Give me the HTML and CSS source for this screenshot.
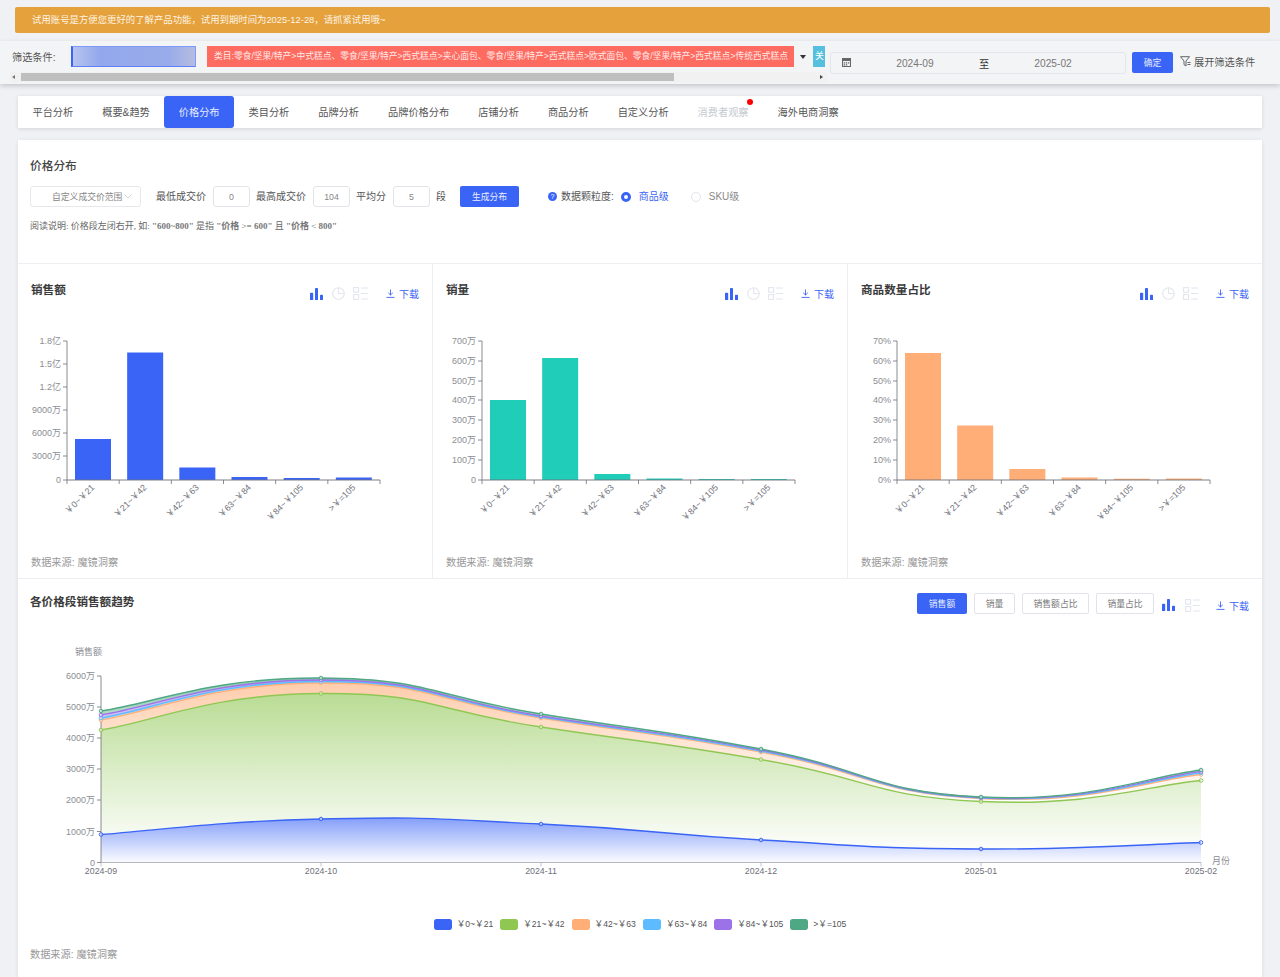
FILE: index.html
```html
<!DOCTYPE html>
<html lang="zh-CN">

<head>
  <meta charset="UTF-8" />
  <title>价格分布</title>
  <link rel="stylesheet" href="styles.css">
</head>

<body>
  <!-- iconos compartidos -->
  <svg class="icon-defs" width="0" height="0">
    <symbol id="i-bars" viewBox="0 0 13 12">
      <path d="M0 5.5q0-.8.8-.8h1.6q.8 0 .8.8V12H0zM5 .8q0-.8.8-.8h1.4q.8 0 .8.8V12H5zM10 7.5q0-.8.8-.8h1.4q.8 0 .8.8V12h-3z" fill="#3a64f6" />
    </symbol>
    <symbol id="i-pie" viewBox="0 0 14 14">
      <g fill="none" stroke="#e4e6ee" stroke-width="1.2">
        <circle cx="7" cy="7" r="6.2" />
        <path d="M7 .8V7h6.2" />
      </g>
    </symbol>
    <symbol id="i-list" viewBox="0 0 15 13">
      <g fill="none" stroke="#e4e6ee" stroke-width="1.1">
        <rect x=".6" y=".6" width="5" height="4.6" />
        <rect x=".6" y="7.6" width="5" height="4.8" />
        <path d="M8 1h7M8 6.5h7M8 12h7" />
      </g>
    </symbol>
    <symbol id="i-down" viewBox="0 0 9 9">
      <path d="M4.5 .5V6M2.2 3.8 4.5 6l2.3-2.2M.5 8.4h8" fill="none" stroke="#3a64f6" stroke-width=".9" />
    </symbol>
  </svg>

  <div class="aviso">试用账号是方便您更好的了解产品功能，试用到期时间为2025-12-28，请抓紧试用哦~</div>

  <div class="filtros">
    <div class="filtros-izq">
      <div class="filtros-fila">
        <span class="filtros-label">筛选条件:</span>
        <div class="caja-borrosa"></div>
        <span class="tag-rojo">类目:零食/坚果/特产&gt;中式糕点、零食/坚果/特产&gt;西式糕点&gt;夹心面包、零食/坚果/特产&gt;西式糕点&gt;欧式面包、零食/坚果/特产&gt;西式糕点&gt;传统西式糕点</span>
        <span class="triangulo"></span>
        <span class="tag-cian">关</span>
      </div>
      <div class="scroll">
        <span class="flecha flecha-izq"></span>
        <span class="scroll-thumb"></span>
        <span class="flecha flecha-der"></span>
      </div>
    </div>
    <div class="fechas">
      <svg class="calendario" width="9" height="9" viewBox="0 0 9 9">
        <rect x=".5" y=".5" width="8" height="8" fill="none" stroke="#666" />
        <rect x="0" y="0" width="9" height="3" fill="#666" />
        <path d="M1.700 4.300h1.400v1.200H1.700zM3.800 4.300h1.400v1.200H3.800zM5.900 4.300h1.400v1.200H5.900zM1.700 6.300h1.400v1.200H1.700zM3.800 6.300h1.400v1.200H3.800z" fill="#666" />
      </svg>
      <span class="fecha">2024-09</span>
      <span class="fecha-a">至</span>
      <span class="fecha">2025-02</span>
    </div>
    <button class="btn-azul btn-ok">确定</button>
    <div class="expandir">
      <svg width="11" height="11" viewBox="0 0 11 11">
        <path d="M.5 .7h9L6 5v5L4 8.600V5z" fill="none" stroke="#555" stroke-width=".9" />
        <path d="M7.500 6.500H10.500M7.500 8.500H10.500" stroke="#555" stroke-width=".9" />
      </svg>
      <span>展开筛选条件</span>
    </div>
  </div>

  <div class="tabs">
    <a class="tab">平台分析</a>
    <a class="tab">概要&amp;趋势</a>
    <a class="tab activo">价格分布</a>
    <a class="tab">类目分析</a>
    <a class="tab">品牌分析</a>
    <a class="tab">品牌价格分布</a>
    <a class="tab">店铺分析</a>
    <a class="tab">商品分析</a>
    <a class="tab">自定义分析</a>
    <a class="tab apagado">消费者观察<i class="punto"></i></a>
    <a class="tab">海外电商洞察</a>
  </div>

  <div class="panel">
    <section class="cabecera">
      <h2 class="titulo">价格分布</h2>
      <div class="form-fila">
        <div class="selector">自定义成交价范围
          <svg width="8" height="5" viewBox="0 0 8 5"><path d="M.5 .5 4 4 7.500 .5" fill="none" stroke="#c5c8ce" stroke-width=".8" /></svg>
        </div>
        <span class="form-label l-min">最低成交价</span>
        <input class="campo" value="0" readonly />
        <span class="form-label">最高成交价</span>
        <input class="campo" value="104" readonly />
        <span class="form-label">平均分</span>
        <input class="campo" value="5" readonly />
        <span class="form-label">段</span>
        <button class="btn-azul btn-gen">生成分布</button>
        <span class="ayuda">?</span>
        <span class="form-label l-gran">数据颗粒度:</span>
        <span class="radio marcado"></span>
        <span class="radio-txt azul">商品级</span>
        <span class="radio"></span>
        <span class="radio-txt">SKU级</span>
      </div>
      <p class="nota">阅读说明: 价格段左闭右开, 如: <b>"600~800"</b> 是指 <b>"价格</b> &gt;= <b>600"</b> 且 <b>"价格</b> &lt; <b>800"</b></p>
    </section>

    <section class="fila-graficos">
      <div class="columna">
        <div class="col-head">
          <h3 class="subtitulo">销售额</h3>
          <div class="herramientas">
            <svg class="ic-bars"><use href="#i-bars" /></svg>
            <svg class="ic-pie"><use href="#i-pie" /></svg>
            <svg class="ic-list"><use href="#i-list" /></svg>
            <a class="descarga"><svg class="ic-down"><use href="#i-down" /></svg>下载</a>
          </div>
        </div>
        <div id="g-ventas"></div>
        <p class="fuente">数据来源: 魔镜洞察</p>
      </div>
      <div class="columna">
        <div class="col-head">
          <h3 class="subtitulo">销量</h3>
          <div class="herramientas">
            <svg class="ic-bars"><use href="#i-bars" /></svg>
            <svg class="ic-pie"><use href="#i-pie" /></svg>
            <svg class="ic-list"><use href="#i-list" /></svg>
            <a class="descarga"><svg class="ic-down"><use href="#i-down" /></svg>下载</a>
          </div>
        </div>
        <div id="g-volumen"></div>
        <p class="fuente">数据来源: 魔镜洞察</p>
      </div>
      <div class="columna">
        <div class="col-head">
          <h3 class="subtitulo">商品数量占比</h3>
          <div class="herramientas">
            <svg class="ic-bars"><use href="#i-bars" /></svg>
            <svg class="ic-pie"><use href="#i-pie" /></svg>
            <svg class="ic-list"><use href="#i-list" /></svg>
            <a class="descarga"><svg class="ic-down"><use href="#i-down" /></svg>下载</a>
          </div>
        </div>
        <div id="g-cantidad"></div>
        <p class="fuente">数据来源: 魔镜洞察</p>
      </div>
    </section>

    <section class="tendencia">
      <div class="tend-head">
        <h3 class="subtitulo">各价格段销售额趋势</h3>
        <div class="herramientas">
          <button class="btn-azul btn-tend">销售额</button>
          <button class="btn-gris b-vol">销量</button>
          <button class="btn-gris b-vp">销售额占比</button>
          <button class="btn-gris b-qp">销量占比</button>
          <svg class="ic-bars"><use href="#i-bars" /></svg>
          <svg class="ic-list"><use href="#i-list" /></svg>
          <a class="descarga"><svg class="ic-down"><use href="#i-down" /></svg>下载</a>
        </div>
      </div>
      <div id="g-tendencia"></div>
      <div class="leyenda" id="leyenda"></div>
      <p class="fuente fuente-tend">数据来源: 魔镜洞察</p>
    </section>
  </div>

  <script src="charts.js"></script>
</body>

</html>
```

FILE: styles.css
```css
html,
body {
  margin: 0;
  height: 977px;
  overflow: hidden;
}

body {
  font-family: "Liberation Sans", "Noto Sans CJK SC", sans-serif;
  font-size: 10px;
  color: #444;
  background-color: #f0f1f5;
  padding-top: 7px;
  box-sizing: border-box;
}

.icon-defs {
  position: absolute;
}

h2,
h3,
p {
  margin: 0;
}

/* aviso */
.aviso {
  margin: 0 10px 0 15px;
  height: 26px;
  line-height: 26px;
  padding-left: 17px;
  background-color: #e5a13c;
  border-radius: 2px;
  color: #fdf3e2;
  font-size: 9.4px;
}

/* filtros */
.filtros {
  display: flex;
  align-items: flex-start;
  height: 43px;
  margin-top: 8px;
  background-color: #f3f4f6;
  box-shadow: 0 2px 5px rgba(0, 0, 0, 0.18);
}

.filtros-izq {
  width: 817px;
  margin-left: 10px;
  flex: none;
}

.filtros-fila {
  display: flex;
  align-items: center;
  height: 21px;
  margin-top: 5px;
  padding-left: 2px;
  overflow: hidden;
}

.filtros-label {
  width: 59px;
  flex: none;
  font-size: 10.2px;
  color: #555;
}

.caja-borrosa {
  flex: none;
  width: 125px;
  height: 21px;
  box-sizing: border-box;
  border: 1px solid #7d99fa;
  border-left: 2px solid #3a64f6;
  border-bottom-color: #5f80f8;
  margin-right: 11px;
  background: linear-gradient(90deg, #b7c4f0, #93a8ec 22%, #98abea 78%, #b6bce0);
}

.tag-rojo {
  flex: none;
  width: 587px;
  box-sizing: border-box;
  height: 21px;
  line-height: 21px;
  padding-left: 7px;
  background-color: #fe6b60;
  color: #ffe9e6;
  font-size: 8.75px;
  white-space: nowrap;
  overflow: hidden;
}

.triangulo {
  flex: none;
  margin: 0 7px 0 6px;
  border-left: 3.5px solid transparent;
  border-right: 3.5px solid transparent;
  border-top: 4px solid #333;
}

.tag-cian {
  flex: none;
  width: 12px;
  height: 21px;
  line-height: 21px;
  padding-left: 2px;
  box-sizing: border-box;
  background-color: #56bfe0;
  color: #fff;
  font-size: 8.8px;
  white-space: nowrap;
}

.scroll {
  display: flex;
  align-items: center;
  height: 10px;
  margin-top: 5px;
  background-color: #f1f1f1;
}

.scroll-thumb {
  width: 653px;
  height: 8px;
  margin-left: 6px;
  background-color: #bfbfbf;
}

.flecha {
  flex: none;
  border-top: 2.5px solid transparent;
  border-bottom: 2.5px solid transparent;
}

.flecha-izq {
  margin-left: 2px;
  border-right: 3px solid #777;
}

.flecha-der {
  margin-left: auto;
  margin-right: 4px;
  border-left: 3px solid #444;
}

.fechas {
  display: flex;
  align-items: center;
  flex: none;
  width: 296px;
  height: 22px;
  margin: 11px 0 0 3px;
  padding: 0 8px 0 11px;
  box-sizing: border-box;
  border: 1px solid #e4e6ea;
  border-radius: 3px;
  color: #777;
  font-size: 10.2px;
}

.calendario {
  flex: none;
  margin-bottom: 2px;
}

.fecha {
  flex: 1;
  text-align: center;
}

.fecha-a {
  color: #333;
}

.btn-azul,
.btn-gris {
  font-family: inherit;
  font-size: 8.8px;
  height: 21px;
  padding: 0;
  border-radius: 2px;
  box-sizing: border-box;
}

.btn-azul {
  background-color: #3a64f6;
  border: none;
  color: #e8edff;
}

.btn-gris {
  background-color: #fff;
  border: 1px solid #e2e3ea;
  color: #777;
}

.btn-ok {
  flex: none;
  width: 41px;
  margin: 11px 0 0 6px;
}

.expandir {
  display: flex;
  align-items: center;
  gap: 3px;
  height: 21px;
  margin: 10px 0 0 7px;
  font-size: 10.2px;
  color: #555;
  white-space: nowrap;
}

/* pestañas */
.tabs {
  display: flex;
  height: 32px;
  margin: 12px 18px 0;
  background-color: #fff;
  box-shadow: 0 1px 4px rgba(0, 0, 0, 0.12);
}

.tab {
  position: relative;
  padding: 1px 14.5px 0;
  line-height: 32px;
  font-size: 10.2px;
  color: #555;
  white-space: nowrap;
}

.tab.activo {
  background-color: #3a64f6;
  border-radius: 3px;
  color: #e8edff;
}

.tab.apagado {
  color: #c6c9d0;
}

.punto {
  position: absolute;
  top: 3px;
  right: 10px;
  width: 6px;
  height: 6px;
  border-radius: 50%;
  background-color: #f00;
}

/* panel principal */
.panel {
  height: 837px;
  margin: 12px 18px 0;
  background-color: #fff;
  box-shadow: 0 1px 4px rgba(0, 0, 0, 0.1);
}

.cabecera {
  height: 124px;
  box-sizing: border-box;
  padding: 18px 12px 0;
  border-bottom: 1px solid #eceef2;
}

.titulo {
  font-size: 11.7px;
  line-height: 16px;
  font-weight: 500;
  color: #444;
}

.form-fila {
  display: flex;
  align-items: center;
  height: 21px;
  margin-top: 12px;
}

.selector {
  display: flex;
  align-items: center;
  justify-content: space-between;
  width: 111px;
  height: 21px;
  padding: 0 8px 0 21px;
  box-sizing: border-box;
  border: 1px solid #e6e8ec;
  border-radius: 3px;
  color: #888;
  font-size: 8.8px;
  white-space: nowrap;
}

.form-label {
  font-size: 10px;
  color: #555;
  margin-left: 6px;
  padding-bottom: 2px;
  white-space: nowrap;
}

.l-min {
  margin-left: 15px;
}

.campo {
  width: 37px;
  height: 21px;
  margin: 0 0 0 7px;
  padding: 0;
  box-sizing: border-box;
  border: 1px solid #e2e4ea;
  border-radius: 3px;
  font-family: inherit;
  font-size: 8.8px;
  color: #888;
  text-align: center;
}

.btn-gen {
  width: 59px;
  margin-left: 14px;
}

.ayuda {
  width: 9px;
  height: 9px;
  margin-left: 29px;
  border-radius: 50%;
  background-color: #3a64f6;
  color: #fff;
  font-size: 7px;
  line-height: 9px;
  text-align: center;
}

.l-gran {
  margin-left: 4px;
}

.radio {
  width: 10px;
  height: 10px;
  box-sizing: border-box;
  margin-left: 7px;
  border: 1px solid #e2e4ea;
  border-radius: 50%;
}

.radio.marcado {
  border: 3px solid #3a64f6;
  background-color: #fff;
}

.radio-txt {
  margin-left: 8px;
  margin-right: 15px;
  padding-bottom: 2px;
  font-size: 10px;
  color: #888;
}

.radio-txt.azul {
  color: #3a64f6;
}

.nota {
  margin-top: 13px;
  font-family: "Liberation Serif", "Noto Sans CJK SC", serif;
  font-size: 9px;
  line-height: 12px;
  color: #666;
}

.nota b {
  font-weight: 700;
  color: #777;
}

/* fila de graficos */
.fila-graficos {
  display: flex;
  height: 315px;
  box-sizing: border-box;
  border-bottom: 1px solid #eceef2;
}

.columna {
  display: flex;
  flex-direction: column;
  width: 415px;
  box-sizing: border-box;
  border-right: 1px solid #eceef2;
}

.columna:last-child {
  width: 414px;
  border-right: none;
}

.col-head {
  display: flex;
  justify-content: space-between;
  align-items: flex-start;
  height: 56px;
  padding: 18px 13px 0;
  box-sizing: border-box;
}

.subtitulo {
  font-size: 11.6px;
  line-height: 16px;
  font-weight: 700;
  color: #3a3a3a;
}

.herramientas {
  display: flex;
  align-items: center;
  gap: 9px;
  margin-top: 4px;
}

.ic-bars {
  width: 13px;
  height: 12px;
}

.ic-pie {
  width: 13px;
  height: 13px;
}

.ic-list {
  width: 15px;
  height: 13px;
  margin-left: -1px;
}

.ic-down {
  width: 9px;
  height: 9px;
}

.descarga {
  display: flex;
  align-items: center;
  gap: 4px;
  margin-left: 9px;
  font-size: 10px;
  color: #3a64f6;
  white-space: nowrap;
}

.fuente {
  margin-top: auto;
  padding: 0 0 7px 13px;
  font-size: 10.2px;
  line-height: 16px;
  color: #999;
}

/* tendencia */
.tend-head {
  display: flex;
  justify-content: space-between;
  align-items: flex-start;
  height: 61px;
  padding: 14px 13px 0 12px;
  box-sizing: border-box;
}

.tend-head .subtitulo {
  margin-top: 1px;
}

.tend-head .herramientas {
  gap: 7px;
  margin-top: 0;
}

.tend-head .ic-bars {
  margin: 3px 0 0 1px;
}

.tend-head .ic-list {
  margin: 3px 0 0 3px;
}

.tend-head .descarga {
  margin-top: 3px;
}

.btn-tend {
  width: 50px;
}

.b-vol {
  width: 41px;
}

.b-vp {
  width: 67px;
}

.b-qp {
  width: 58px;
}

.leyenda {
  display: flex;
  justify-content: center;
  gap: 7px;
  margin-top: 7px;
  font-size: 8.6px;
  line-height: 11px;
  color: #555;
}

.ley-item {
  display: flex;
  align-items: center;
  gap: 5px;
  white-space: nowrap;
}

.ley-muestra {
  width: 18px;
  height: 11px;
  border-radius: 2px;
}

.fuente-tend {
  margin-top: 17px;
  padding-left: 12px;
}

/* textos de los svg */
.eje-y {
  font-size: 9px;
  fill: #8b8d93;
}

.eje-x {
  font-size: 8.8px;
  fill: #6e7079;
}

.eje-nombre {
  font-size: 9px;
  fill: #8b8d93;
}

svg text {
  font-family: "Liberation Sans", "Noto Sans CJK SC", sans-serif;
}
```

FILE: charts.js
```js
const categorias = ['￥0~￥21', '￥21~￥42', '￥42~￥63', '￥63~￥84', '￥84~￥105', '>￥=105'];
const EJE = '#6e7079';

function ticksY(items, x) {
  return items.map(t => `
    <line x1="${x - 4}" x2="${x}" y1="${t[1]}" y2="${t[1]}" stroke="${EJE}" stroke-width=".8" />
    <text class="eje-y" x="${x - 6}" y="${t[1] + 3}" text-anchor="end">${t[0]}</text>`).join('');
}

// todas las y vienen en coordenadas locales: y pagina - 320
function graficoBarras(id, color, etiquetas, topes) {
  const x0 = 49, x1 = 362, base = 160;
  const paso = (x1 - x0) / 6;
  let s = `<svg width="414" height="220" viewBox="0 0 414 220">`;
  topes.forEach((top, i) => {
    const bx = x0 + paso * i + 8;
    s += `<rect x="${bx}" y="${top}" width="36" height="${base - top}" fill="${color}" />`;
  });
  s += ticksY(etiquetas, x0);
  s += `<line x1="${x0}" x2="${x0}" y1="21" y2="${base}" stroke="${EJE}" stroke-width=".8" />`;
  s += `<line x1="${x0}" x2="${x1}" y1="${base}" y2="${base}" stroke="${EJE}" stroke-width=".9" />`;
  for (let i = 0; i <= 6; i++) {
    const tx = x0 + paso * i;
    s += `<line x1="${tx}" x2="${tx}" y1="${base}" y2="${base + 4}" stroke="${EJE}" stroke-width=".8" />`;
  }
  categorias.forEach((c, i) => {
    const cx = x0 + paso * (i + 0.5) + 2;
    s += `<text class="eje-x" text-anchor="end" transform="translate(${cx} ${base + 8}) rotate(-45)">${c}</text>`;
  });
  s += '</svg>';
  document.getElementById(id).innerHTML = s;
}

graficoBarras('g-ventas', '#3a64f6',
  [['1.8亿', 21], ['1.5亿', 44], ['1.2亿', 67], ['9000万', 90], ['6000万', 113], ['3000万', 136], ['0', 160]],
  [119, 32.5, 147.5, 157, 158, 157.5]);

graficoBarras('g-volumen', '#20cdb9',
  [['700万', 21], ['600万', 41], ['500万', 61], ['400万', 80], ['300万', 100], ['200万', 120], ['100万', 140], ['0', 160]],
  [80, 38, 154, 158.5, 159, 159]);

graficoBarras('g-cantidad', '#ffae78',
  [['70%', 21], ['60%', 41], ['50%', 61], ['40%', 80], ['30%', 100], ['20%', 120], ['10%', 140], ['0%', 160]],
  [33, 105.5, 149, 157.5, 158.7, 158.5]);

// tendencia: coordenadas locales x - 18, y - 640
const series = [
  { color: '#3a64f6', ys: [834.5, 819, 824, 840, 849, 842.5] },
  { color: '#8fc753', ys: [730, 693.5, 727, 759.5, 801.5, 780.5] },
  { color: '#ffae78', ys: [720, 683, 718, 752, 798.5, 774.5] },
  { color: '#5cbcff', ys: [718, 681.5, 717, 751, 798, 773] },
  { color: '#9b72e8', ys: [715, 680, 716, 750, 797.5, 771.5] },
  { color: '#4fa884', ys: [711, 678, 714, 749, 797, 770] }
];
const xs = [83, 303, 523, 743, 963, 1183];

function puntos(ys) {
  return ys.map((y, i) => [xs[i], y - 640]);
}

// curva suave, misma idea que smooth:true de echarts
function curva(p, mover) {
  let d = `${mover}${p[0][0]} ${p[0][1]}`;
  for (let i = 0; i < p.length - 1; i++) {
    const prev = p[i - 1] || p[i];
    const next = p[i + 2] || p[i + 1];
    const c1 = [p[i][0] + (p[i + 1][0] - prev[0]) / 4, p[i][1] + (p[i + 1][1] - prev[1]) / 4];
    const c2 = [p[i + 1][0] - (next[0] - p[i][0]) / 4, p[i + 1][1] - (next[1] - p[i][1]) / 4];
    d += `C${c1[0]} ${c1[1]} ${c2[0]} ${c2[1]} ${p[i + 1][0]} ${p[i + 1][1]}`;
  }
  return d;
}

function graficoTendencia() {
  const base = 222.5, x0 = 83, x1 = 1183;
  let s = `<svg width="1244" height="270" viewBox="0 0 1244 270"><defs>`;
  series.forEach((sr, i) => {
    s += `<linearGradient id="grad${i}" x1="0" y1="0" x2="0" y2="1">
      <stop offset="0" stop-color="${sr.color}" stop-opacity=".62" />
      <stop offset="1" stop-color="${sr.color}" stop-opacity=".02" /></linearGradient>`;
  });
  s += '</defs>';

  series.forEach((sr, i) => {
    const arriba = puntos(sr.ys);
    let d = curva(arriba, 'M');
    if (i === 0) {
      d += `L${x1} ${base}L${x0} ${base}Z`;
    } else {
      d += curva(puntos(series[i - 1].ys).reverse(), 'L') + 'Z';
    }
    s += `<path d="${d}" fill="url(#grad${i})" />`;
  });

  const marcas = [['6000万', 36], ['5000万', 67], ['4000万', 98], ['3000万', 129], ['2000万', 160], ['1000万', 191.5], ['0', base]];
  s += ticksY(marcas, x0);
  s += `<line x1="${x0}" x2="${x0}" y1="36" y2="${base}" stroke="${EJE}" stroke-width=".8" />`;
  s += `<line x1="${x0}" x2="${x1}" y1="${base}" y2="${base}" stroke="#b4b6bc" stroke-width="1" />`;

  series.forEach(sr => {
    const p = puntos(sr.ys);
    s += `<path d="${curva(p, 'M')}" fill="none" stroke="${sr.color}" stroke-width="1.4" />`;
    p.forEach(q => {
      s += `<circle cx="${q[0]}" cy="${q[1]}" r="1.8" fill="#fff" fill-opacity=".5" stroke="${sr.color}" stroke-width="1" />`;
    });
  });

  ['2024-09', '2024-10', '2024-11', '2024-12', '2025-01', '2025-02'].forEach((m, i) => {
    s += `<line x1="${xs[i]}" x2="${xs[i]}" y1="${base}" y2="${base + 4}" stroke="#b4b6bc" stroke-width=".8" />`;
    s += `<text class="eje-x" x="${xs[i]}" y="${base + 11}" text-anchor="middle">${m}</text>`;
  });
  s += `<text class="eje-nombre" x="57" y="15">销售额</text>`;
  s += `<text class="eje-nombre" x="1194" y="224">月份</text>`;
  s += '</svg>';
  document.getElementById('g-tendencia').innerHTML = s;
}

graficoTendencia();

document.getElementById('leyenda').innerHTML = categorias.map((c, i) => `
  <span class="ley-item"><svg class="ley-muestra" viewBox="0 0 18 11"><rect width="18" height="11" rx="2" fill="${series[i].color}" /></svg>${c}</span>`).join('');
```
